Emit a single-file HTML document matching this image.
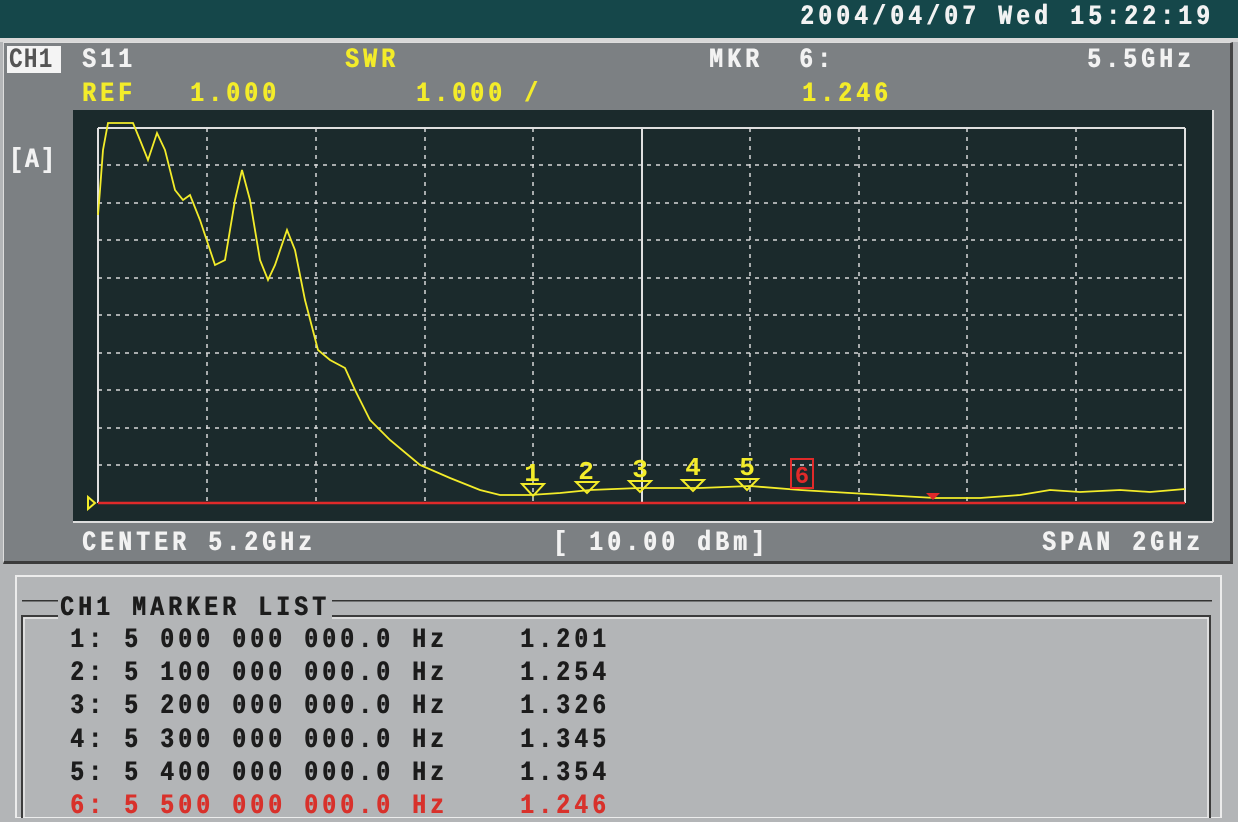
<!DOCTYPE html>
<html><head><meta charset="utf-8"><style>
*{margin:0;padding:0}
body{width:1238px;height:818px;overflow:hidden;background:#b3b5b7;position:relative;font-family:"Liberation Mono",monospace;font-weight:bold}
.t{position:absolute;font-size:23px;letter-spacing:4.2px;line-height:24px;white-space:pre;transform:scaleY(1.2);transform-origin:0 50%}
.w{color:#f2f2f2;text-shadow:0.6px 0 0 #f2f2f2}.y{color:#f3ec2a;text-shadow:0.6px 0 0 #f3ec2a}.k{color:#1c1c1c;text-shadow:0.6px 0 0 #1c1c1c}.r{color:#d8312b;text-shadow:0.6px 0 0 #d8312b}
</style></head><body>
<div style="position:absolute;left:0;top:0;width:1238px;height:38px;background:#15474a"></div>
<div class="t w" style="left:800px;top:5px">2004/04/07 Wed 15:22:19</div>
<div style="position:absolute;left:0;top:38px;width:1238px;height:4px;background:#d8d8d8"></div>
<div style="position:absolute;left:3px;top:42px;width:1226px;height:518px;background:#7c8083;border:1px solid #ddd;border-right:3px solid #444;border-bottom:3px solid #3b3b3b"></div>
<div style="position:absolute;left:7px;top:46px;width:54px;height:27px;background:#f4f4f4"></div>
<div class="t" style="left:9px;top:48px;color:#555;letter-spacing:1px">CH1</div>
<div class="t w" style="left:82px;top:48px">S11</div>
<div class="t y" style="left:345px;top:48px">SWR</div>
<div class="t w" style="left:709px;top:48px">MKR  6:</div>
<div class="t w" style="left:1087px;top:48px">5.5GHz</div>
<div class="t y" style="left:82px;top:82px">REF</div>
<div class="t y" style="left:190px;top:82px">1.000</div>
<div class="t y" style="left:416px;top:82px">1.000 /</div>
<div class="t y" style="left:802px;top:82px">1.246</div>
<div class="t w" style="left:9px;top:148px;letter-spacing:2px">[A]</div>
<svg style="position:absolute;left:0;top:0" width="1238" height="818">
<rect x="73" y="110" width="1140" height="412" fill="#1b2a2c"/>
<rect x="73" y="521" width="1140" height="2" fill="#ddd"/>
<rect x="1212" y="110" width="2" height="412" fill="#ddd"/>
<g stroke="#d8d8d8" stroke-width="1.5" stroke-dasharray="4 5">
<line x1="98" y1="165" x2="1185" y2="165"/><line x1="98" y1="203" x2="1185" y2="203"/><line x1="98" y1="240" x2="1185" y2="240"/><line x1="98" y1="278" x2="1185" y2="278"/><line x1="98" y1="315" x2="1185" y2="315"/><line x1="98" y1="353" x2="1185" y2="353"/><line x1="98" y1="390" x2="1185" y2="390"/><line x1="98" y1="428" x2="1185" y2="428"/><line x1="98" y1="465" x2="1185" y2="465"/>
<line x1="207" y1="128" x2="207" y2="503"/><line x1="316" y1="128" x2="316" y2="503"/><line x1="425" y1="128" x2="425" y2="503"/><line x1="533" y1="128" x2="533" y2="503"/><line x1="750" y1="128" x2="750" y2="503"/><line x1="859" y1="128" x2="859" y2="503"/><line x1="967" y1="128" x2="967" y2="503"/><line x1="1076" y1="128" x2="1076" y2="503"/>
</g>
<g stroke="#e0e0e0" stroke-width="2">
<line x1="98" y1="128" x2="1185" y2="128"/><line x1="98" y1="128" x2="98" y2="503"/><line x1="1185" y1="128" x2="1185" y2="503"/><line x1="642" y1="128" x2="642" y2="503"/>
</g>
<line x1="98" y1="503" x2="1185" y2="503" stroke="#e02a2a" stroke-width="2.5"/>
<polygon points="88,497 95,503 88,509" fill="none" stroke="#f3ec2a" stroke-width="2"/>
<polyline fill="none" stroke="#f3ec2a" stroke-width="1.8" points="98,215 100,190 103,150 108,123 133,123 140,140 148,160 157,133 165,150 175,190 183,200 190,195 200,220 215,265 225,260 235,200 242,170 250,200 260,260 268,280 275,265 287,230 295,250 305,300 318,350 330,360 345,368 355,390 370,420 390,440 420,465 450,478 480,490 500,495 530,495 560,493 590,490 640,488 700,488 750,486 800,490 850,493 900,496 935,498 980,498 1020,495 1050,490 1080,492 1120,490 1150,492 1185,489"/>
<g fill="none" stroke="#f3ec2a" stroke-width="2">
<polygon points="522,484 544,484 533,496"/><polygon points="576,482 598,482 587,493"/><polygon points="629,481 651,481 640,492"/><polygon points="682,480 704,480 693,491"/><polygon points="736,479 758,479 747,490"/>
</g>
<g fill="#f3ec2a" font-family="Liberation Mono,monospace" font-weight="bold" font-size="26" text-anchor="middle">
<text x="532" y="481">1</text><text x="586" y="479">2</text><text x="640" y="477">3</text><text x="693" y="475">4</text><text x="747" y="475">5</text>
</g>
<rect x="791" y="459" width="22" height="29" fill="none" stroke="#e02a2a" stroke-width="2"/>
<text x="802" y="483" fill="#e02a2a" font-family="Liberation Mono,monospace" font-weight="bold" font-size="24" text-anchor="middle">6</text>
<polygon points="926,493 940,493 933,500" fill="#e02a2a"/>
<rect x="22" y="600" width="1190" height="1.5" fill="#333"/>
<rect x="16" y="576" width="1205" height="242" fill="none" stroke="#ececec" stroke-width="2"/>
<rect x="22" y="616" width="1188" height="210" fill="none" stroke="#3c3c3c" stroke-width="2"/>
<rect x="24" y="618" width="1184" height="210" fill="none" stroke="#ececec" stroke-width="1.5"/>
</svg>
<div class="t w" style="left:82px;top:531px">CENTER 5.2GHz</div>
<div class="t w" style="left:553px;top:531px">[ 10.00 dBm]</div>
<div class="t w" style="left:1042px;top:531px">SPAN 2GHz</div>
<div class="t k" style="left:58px;top:596px;background:#b3b5b7;padding:0 2px">CH1 MARKER LIST</div>
<div class="t k" style="left:70px;top:628px">1: 5 000 000 000.0 Hz    1.201</div>
<div class="t k" style="left:70px;top:661px">2: 5 100 000 000.0 Hz    1.254</div>
<div class="t k" style="left:70px;top:694px">3: 5 200 000 000.0 Hz    1.326</div>
<div class="t k" style="left:70px;top:728px">4: 5 300 000 000.0 Hz    1.345</div>
<div class="t k" style="left:70px;top:761px">5: 5 400 000 000.0 Hz    1.354</div>
<div class="t r" style="left:70px;top:794px">6: 5 500 000 000.0 Hz    1.246</div>
</body></html>
